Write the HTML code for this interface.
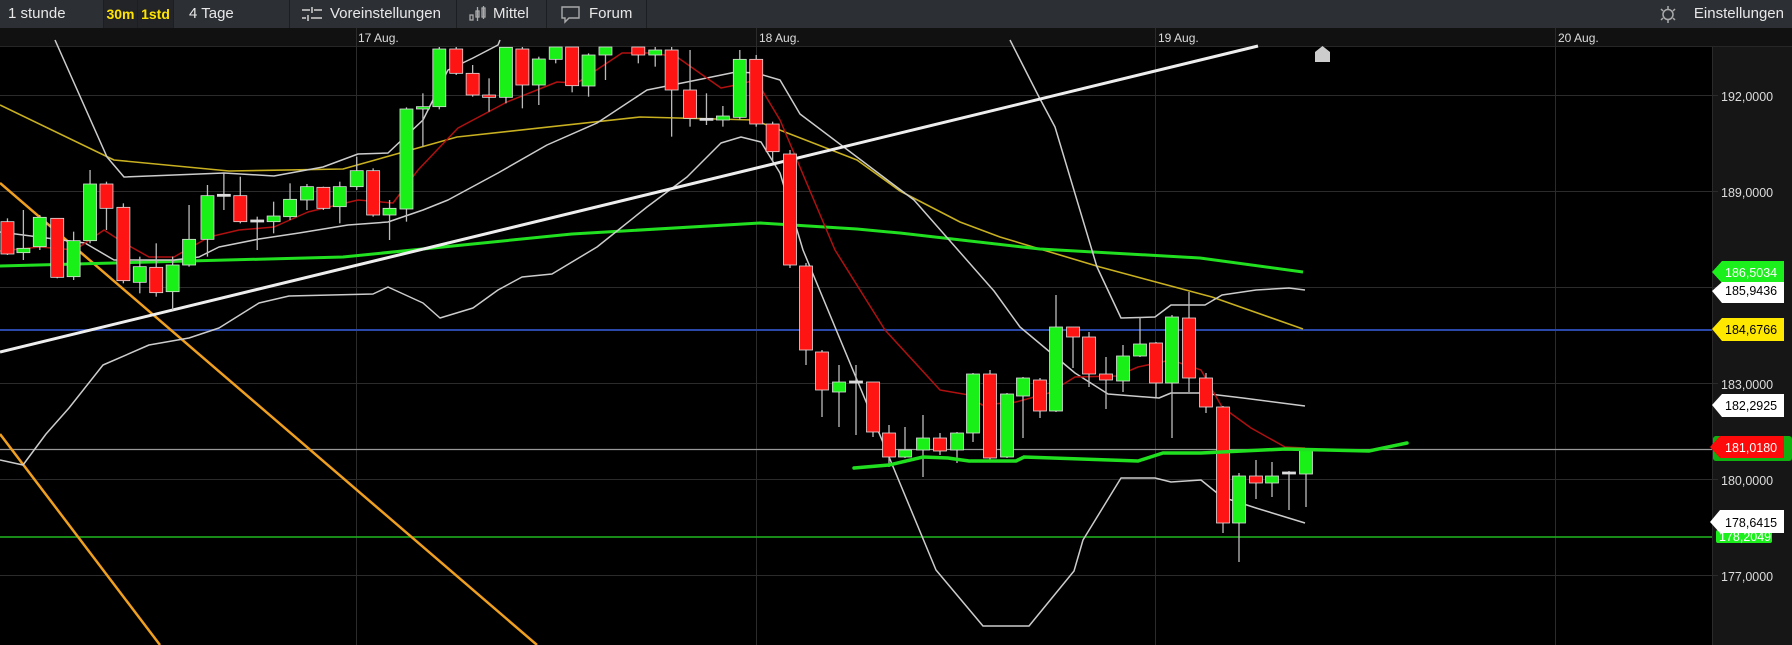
<!DOCTYPE html>
<html><head><meta charset="utf-8"><style>
html,body{margin:0;padding:0;background:#000;width:1792px;height:645px;overflow:hidden;font-family:"Liberation Sans",sans-serif}
#tb{position:absolute;left:0;top:0;width:1792px;height:28px;background:#2c2f34;color:#e8e8e8;font-size:15px}
.s{position:absolute;top:0;height:28px;line-height:28px;border-right:1px solid #1c1e21;box-sizing:border-box}
</style></head><body>
<div id="tb">
<div class="s" style="left:0;width:104px;padding-left:8px">1 stunde</div>
<div class="s" style="left:104px;width:34px;background:#222428;color:#ffe400;font-weight:bold;text-align:center;font-size:14px">30m</div>
<div class="s" style="left:138px;width:36px;background:#222428;color:#ffe400;font-weight:bold;text-align:center;font-size:14px">1std</div>
<div class="s" style="left:174px;width:116px;padding-left:15px">4 Tage</div>
<div class="s" style="left:290px;width:167px;padding-left:40px">Voreinstellungen
<svg style="position:absolute;left:12px;top:7px" width="20" height="14"><g stroke="#aaa" stroke-width="2"><line x1="0" y1="3" x2="8" y2="3"/><line x1="12" y1="3" x2="20" y2="3"/><line x1="0" y1="11" x2="4" y2="11"/><line x1="9" y1="11" x2="20" y2="11"/><line x1="10" y1="0" x2="10" y2="6"/><line x1="6" y1="8" x2="6" y2="14"/></g></svg></div>
<div class="s" style="left:457px;width:90px;padding-left:36px">Mittel
<svg style="position:absolute;left:12px;top:6px" width="18" height="16"><g stroke="#aaa" stroke-width="1.3" fill="none"><rect x="1" y="9" width="3" height="5"/><rect x="7" y="5" width="3" height="6"/><rect x="13" y="2" width="3" height="9"/><line x1="8.5" y1="1" x2="8.5" y2="15"/><line x1="14.5" y1="0" x2="14.5" y2="13"/></g></svg></div>
<div class="s" style="left:547px;width:100px;padding-left:42px">Forum
<svg style="position:absolute;left:14px;top:6px" width="20" height="18"><path d="M1 1H18V12H8L4 16V12H1Z" fill="none" stroke="#aaa" stroke-width="1.4"/></svg></div>
<div style="position:absolute;right:8px;top:0;line-height:28px">Einstellungen</div>
<svg style="position:absolute;left:1659px;top:6px" width="18" height="17"><g stroke="#aaa" stroke-width="1.5" fill="none"><circle cx="9" cy="8.5" r="5"/><line x1="9" y1="0" x2="9" y2="3"/><line x1="9" y1="14" x2="9" y2="17"/><line x1="2" y1="3" x2="4" y2="5"/><line x1="16" y1="3" x2="14" y2="5"/><line x1="2" y1="14" x2="4" y2="12"/><line x1="16" y1="14" x2="14" y2="12"/></g></svg>
</div>
<svg id="c" style="position:absolute;left:0;top:28px" width="1792" height="617" viewBox="0 28 1792 617" font-family="Liberation Sans, sans-serif">
<rect x="0" y="28" width="1792" height="19" fill="#111"/>
<line x1="0" y1="46.5" x2="1792" y2="46.5" stroke="#262626"/>
<rect x="1712" y="47" width="80" height="598" fill="#161616"/>
<line x1="1712.5" y1="47" x2="1712.5" y2="645" stroke="#2a2a2a"/>
<g fill="#ddd" font-size="12">
<text x="358" y="42">17 Aug.</text><text x="759" y="42">18 Aug.</text><text x="1158" y="42">19 Aug.</text><text x="1558" y="42">20 Aug.</text>
</g>
<g stroke="#2b2b2b" stroke-width="1">
<line x1="356.5" y1="28" x2="356.5" y2="645"/><line x1="756.5" y1="28" x2="756.5" y2="645"/><line x1="1155.5" y1="28" x2="1155.5" y2="645"/><line x1="1555.5" y1="28" x2="1555.5" y2="645"/>
<line x1="0" y1="95.5" x2="1718" y2="95.5"/><line x1="0" y1="191.5" x2="1718" y2="191.5"/><line x1="0" y1="287.5" x2="1718" y2="287.5"/><line x1="0" y1="383.5" x2="1718" y2="383.5"/><line x1="0" y1="479.5" x2="1718" y2="479.5"/><line x1="0" y1="575.5" x2="1718" y2="575.5"/>
</g>
<g fill="#ddd" font-size="12.5">
<text x="1721" y="101">192,0000</text><text x="1721" y="197">189,0000</text><text x="1721" y="389">183,0000</text><text x="1721" y="485">180,0000</text><text x="1721" y="581">177,0000</text>
</g>
<line x1="0" y1="330" x2="1712" y2="330" stroke="#2a48a8" stroke-width="2"/>
<line x1="0" y1="449.5" x2="1712" y2="449.5" stroke="#999" stroke-width="1.3"/>
<line x1="0" y1="537" x2="1712" y2="537" stroke="#1fb81f" stroke-width="1.5"/>
<line x1="0" y1="183" x2="537" y2="645" stroke="#f0a020" stroke-width="2.5"/>
<line x1="0" y1="434" x2="160" y2="645" stroke="#f0a020" stroke-width="2.5"/>
<g fill="none" stroke-linejoin="round">
<polyline stroke="#c8b020" stroke-width="1.6" points="0,105 114,160 229,171 343,169 457,137 640,117 754,120 857,160 900,191 960,222 1000,237 1100,267 1212,297 1303,329"/>
<polyline stroke="#20e020" stroke-width="3" points="0,266 343,257 572,234 760,223 857,229 900,233 1040,249 1200,258 1303,272"/>
<polyline stroke="#ccc" stroke-width="1.5" points="55,40 107,157 124,177 199,174 224,173 274,176 323,167 358,154 388,153 423,120 448,70 473,58 498,45 500,40"/>
<polyline stroke="#ccc" stroke-width="1.5" points="1010,40 1039,97 1055,127 1097,267 1121,318 1155,317 1171,305 1205,305 1222,295 1256,290 1289,288 1305,290"/>
<polyline stroke="#ccc" stroke-width="1.5" points="0,232 85,243 114,260 174,260 199,257 219,247 259,239 299,233 348,225 388,222 423,210 448,200 498,173 547,145 597,123 647,90 697,80 736,72 756,73 780,80 800,114 914,200 994,291 1020,327 1075,373 1108,394 1159,398 1171,393 1201,393 1243,398 1305,406"/>
<polyline stroke="#ccc" stroke-width="1.5" points="0,460 23,465 46,434 69,408 103,365 149,345 189,338 219,328 259,303 289,296 373,294 388,287 423,303 440,318 473,308 498,290 522,277 552,274 597,247 647,207 687,177 721,143 741,137 761,142 780,173 803,250 936,570 983,626 1029,626 1074,571 1083,540 1121,478 1155,478 1171,482 1201,480 1222,497 1256,508 1305,523"/>
<polyline stroke="#b01010" stroke-width="1.5" points="0,251 40,247 75,250 104,230 124,243 149,257 174,257 209,237 239,230 274,227 308,212 358,200 393,203 418,170 458,128 507,102 557,82 577,83 622,53 652,53 677,57 721,88 736,85 756,80 780,120 835,250 885,330 940,390 969,395 982,405 1016,402 1049,393 1075,377 1117,376 1138,367 1171,360 1201,370 1222,407 1251,428 1285,447 1305,448"/>
</g>
<line x1="0" y1="352" x2="1258" y2="46" stroke="#eee" stroke-width="3"/>
<path d="M1315 62V52L1322.5 46L1330 52V62Z" fill="#ccc"/>
<g id="cand"></g>
<polyline fill="none" stroke="#20e020" stroke-width="3.5" stroke-linecap="round" points="854,468 889,465 923,457 948,458 969,461 1016,461 1024,457 1138,461 1163,453 1201,453 1285,449 1369,451 1407,443"/>
<g font-size="12.5">
<path d="M1712 272L1722 261H1784V283H1722Z" fill="#1cf01c"/><text x="1725" y="277" fill="#fff">186,5034</text>
<path d="M1712 291L1722 282H1784V303H1722Z" fill="#fff"/><text x="1725" y="295" fill="#000">185,9436</text>
<path d="M1712 329L1722 318H1784V341H1722Z" fill="#ffe800"/><text x="1725" y="334" fill="#000">184,6766</text>
<path d="M1712 405L1722 394H1784V417H1722Z" fill="#fff"/><text x="1725" y="410" fill="#000">182,2925</text>
<rect x="1713" y="436" width="79" height="25" rx="3" fill="#10b010"/>
<path d="M1710 447L1720 436H1784V458H1720Z" fill="#ff0a0a"/><text x="1725" y="452" fill="#fff">181,0180</text>
<rect x="1716" y="530" width="56" height="13" rx="2" fill="#1cf01c"/><text x="1719" y="541" fill="#fff">178,2049</text>
<path d="M1710 522L1720 510H1784V533H1720Z" fill="#fff"/><text x="1725" y="527" fill="#000">178,6415</text>
</g>
</svg>
<script>
var A=[[15,575,672,565,675,'r'],[47,655,668,540,690,'g'],[80,562,650,555,660,'g'],[115,565,742,565,745,'r'],[148,632,740,605,750,'g'],[181,462,632,420,640,'g'],[214,462,535,455,600,'r'],[248,532,752,520,760,'r'],[281,710,757,680,790,'g'],[314,712,788,640,800,'r'],[347,705,785,680,840,'g'],[380,628,705,525,710,'g'],[417,497,628,465,680,'g'],[450,493,497,430,540,'d'],[483,497,575,440,580,'r'],[517,570,574,560,660,'d'],[550,558,575,515,610,'g'],[583,508,560,460,570,'g'],[617,470,510,462,540,'g'],[650,472,535,470,540,'r'],[683,470,530,455,580,'g'],[717,422,470,380,480,'g'],[750,422,555,415,560,'r'],[783,535,555,510,630,'g'],[817,237,537,232,575,'g'],[850,230,237,190,350,'g'],[883,57,230,45,238,'g'],[917,57,130,50,135,'r'],[950,130,195,105,200,'r'],[983,195,202,145,245,'r'],[1017,52,202,45,220,'g'],[1050,57,165,45,235,'r'],[1083,87,165,80,225,'g'],[1117,45,88,40,100,'g'],[1150,45,167,40,187,'r'],[1183,75,168,70,200,'g'],[1217,45,75,40,150,'g'],[1283,51,75,51,100,'r'],[1317,60,75,51,110,'g'],[1350,60,180,50,320,'r'],[1387,180,265,60,290,'r'],[1420,265,270,190,285,'d'],[1453,258,270,228,290,'g'],[1487,88,262,60,270,'g'],[1520,88,282,75,290,'r'],[1553,282,365,275,395,'r']];
var B=[[790,154,265,150,268,'r'],[806,266,350,263,365,'r'],[822,352,390,350,417,'r'],[839,382,392,365,427,'g'],[856,381,383,365,435,'d'],[873,382,432,382,437,'r'],[889,433,457,425,467,'r'],[905,450,457,427,458,'g'],[923,438,450,415,477,'g'],[940,438,451,433,455,'r'],[957,433,450,432,463,'g'],[973,374,433,373,442,'g'],[990,374,458,370,460,'r'],[1007,394,457,393,458,'g'],[1023,378,396,377,438,'g'],[1040,380,411,378,418,'r'],[1056,327,411,295,412,'g'],[1073,327,337,327,368,'r'],[1089,337,374,332,387,'r'],[1106,374,380,357,409,'r'],[1123,356,381,345,392,'g'],[1140,344,356,317,357,'g'],[1156,343,383,342,397,'r'],[1172,317,383,315,438,'g'],[1189,318,378,292,392,'r'],[1206,378,407,373,413,'r'],[1223,407,523,406,533,'r'],[1239,476,523,473,562,'g'],[1256,476,483,460,499,'r'],[1272,476,483,462,497,'g'],[1289,472,474,471,510,'d'],[1306,450,474,448,507,'g']];
var s='';
function add(x,bt,bb,wt,wb,c){wt=Math.max(wt,47);bt=Math.max(bt,47);
var col=c=='g'?'#18f018':c=='r'?'#ff1414':'#ddd';
s+='<line x1="'+x+'" y1="'+wt+'" x2="'+x+'" y2="'+wb+'" stroke="#bbb" stroke-width="1.3"/>';
var h=Math.max(bb-bt,2);
s+='<rect x="'+(x-6.5)+'" y="'+bt+'" width="13" height="'+h+'" fill="'+col+'" stroke="#ddd" stroke-width="0.8"/>';}
A.forEach(function(a){add(a[0]/2.01,30+a[1]/3,30+a[2]/3,30+a[3]/3,30+a[4]/3,a[5]);});
B.forEach(function(a){add(a[0],a[1],a[2],a[3],a[4],a[5]);});
document.getElementById('cand').innerHTML=s;
</script>
</body></html>
